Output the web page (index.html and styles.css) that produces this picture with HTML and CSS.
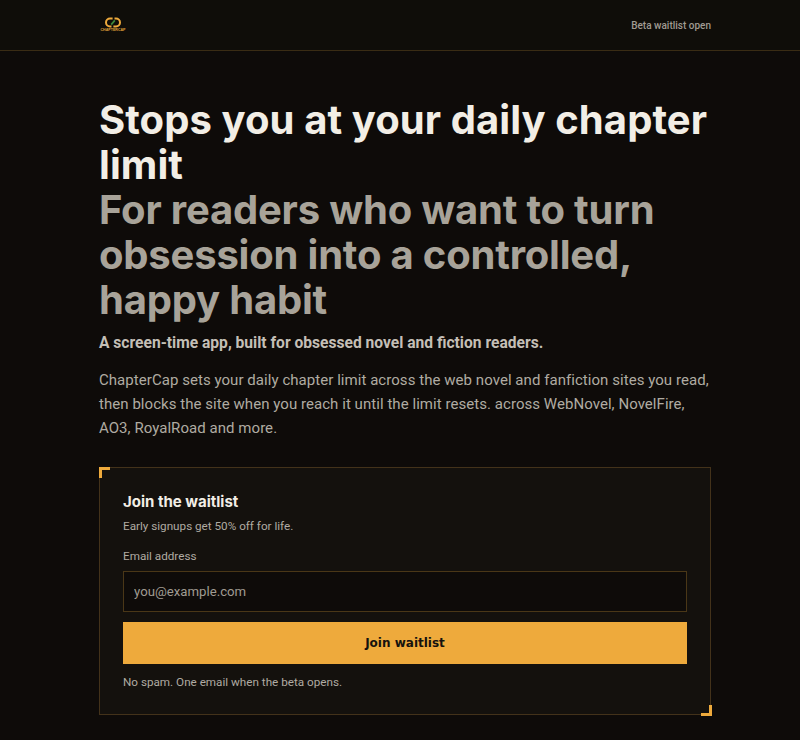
FILE: index.html
```html
<!DOCTYPE html>
<html lang="en">
<head>
<meta charset="utf-8">
<title>ChapterCap</title>
<link rel="stylesheet" href="styles.css">
</head>
<body>
<header class="topbar">
  <div class="topbar-inner">
    <div class="logo">
      <svg class="logo-mark" viewBox="0 0 16 11" width="16" height="11" aria-hidden="true">
        <path d="M7.6 1.5 H5 A4 4 0 0 0 5 9.5 H6.5" fill="none" stroke="#eeaa3c" stroke-width="2"/>
        <path d="M8.4 9.5 H11 A4 4 0 0 0 11 1.5 H9.5" fill="none" stroke="#eeaa3c" stroke-width="2"/>
        <path d="M9.8 3.4 L6.2 7.6" fill="none" stroke="#3f8a3a" stroke-width="1.7"/>
      </svg>
      <span class="logo-text">CHAPTERCAP</span>
    </div>
    <span class="status">Beta waitlist open</span>
  </div>
</header>
<main class="page">
  <h1 class="headline">Stops you at your daily chapter limit<span class="headline-sub">For readers who want to turn obsession into a controlled, happy habit</span></h1>
  <p class="lead">A screen-time app, built for obsessed novel and fiction readers.</p>
  <p class="body-copy">ChapterCap sets your daily chapter limit across the web novel and fanfiction sites you read, then blocks the site when you reach it until the limit resets. across WebNovel, NovelFire, AO3, RoyalRoad and more.</p>
  <section class="card">
    <span class="corner corner-tl"></span>
    <span class="corner corner-br"></span>
    <h2 class="card-title">Join the waitlist</h2>
    <p class="card-sub">Early signups get 50% off for life.</p>
    <form class="form">
      <label class="label" for="email">Email address</label>
      <input class="input" id="email" type="email" placeholder="you@example.com">
      <button class="button" type="button">Join waitlist</button>
    </form>
    <p class="note">No spam. One email when the beta opens.</p>
  </section>
</main>
</body>
</html>
```
FILE: styles.css
```css
* { box-sizing: border-box; }
html, body { margin: 0; padding: 0; }
body {
  background: #0e0b09;
  color: #f2eee6;
  font-family: "Roboto", "Liberation Sans", sans-serif;
  height: 740px;
  overflow: hidden;
}
.topbar {
  height: 51px;
  background: #0f0d09;
  border-bottom: 1px solid #3a2c14;
}
.topbar-inner {
  width: 612px;
  height: 50px;
  margin-left: 99px;
  display: flex;
  align-items: center;
  justify-content: space-between;
}
.logo {
  display: flex;
  flex-direction: column;
  align-items: center;
  width: 26px;
  margin-left: 1px;
  margin-top: -1px;
}
.logo-mark { display: block; }
.logo-text {
  font-family: "Liberation Sans", sans-serif;
  font-size: 3.6px;
  font-weight: 700;
  line-height: 4px;
  color: #e0a23a;
  white-space: nowrap;
}
.status {
  font-size: 10px;
  font-weight: 500;
  color: #a09b92;
}
.page {
  width: 612px;
  margin-left: 99px;
  padding-top: 46px;
}
.headline {
  margin: 0;
  font-family: "Inter", sans-serif;
  font-size: 40px;
  font-weight: 700;
  line-height: 45px;
  letter-spacing: 0.08px;
  color: #f2eee6;
}
.headline-sub {
  display: block;
  letter-spacing: -0.2px;
  color: #a8a399;
}
.lead {
  margin: 9px 0 0;
  font-size: 15.6px;
  font-weight: 700;
  line-height: 24px;
  color: #c4bfb6;
}
.body-copy {
  margin: 13px 0 0;
  font-size: 15px;
  line-height: 24px;
  letter-spacing: 0.05px;
  color: #b0aba2;
}
.card {
  position: relative;
  margin-top: 27px;
  height: 248px;
  padding: 24px 23px;
  background: #14110d;
  border: 1px solid #43321a;
}
.corner {
  position: absolute;
  width: 11px;
  height: 11px;
  border: 0 solid #eeaa3c;
}
.corner-tl { top: -1px; left: -1px; border-width: 3px 0 0 3px; }
.corner-br { bottom: -2px; right: -2px; border-width: 0 3px 3px 0; }
.card-title {
  margin: -1px 0 0;
  font-family: "Inter", sans-serif;
  font-size: 15px;
  font-weight: 700;
  line-height: 22px;
  color: #f2eee6;
}
.card-sub {
  margin: 4px 0 0;
  font-size: 11.7px;
  line-height: 18px;
  color: #b0aba2;
}
.form { display: flex; flex-direction: column; }
.label {
  margin-top: 12px;
  font-size: 11.7px;
  line-height: 18px;
  color: #b0aba2;
}
.input {
  margin-top: 6px;
  height: 41px;
  padding: 0 10px;
  background: #0e0b09;
  border: 1px solid #4a3717;
  border-radius: 0;
  color: #f2eee6;
  font-family: "Roboto", sans-serif;
  font-size: 13.2px;
  outline: none;
}
.input::placeholder { color: #a09b92; opacity: 1; }
.button {
  margin-top: 10px;
  height: 42px;
  background: #eeaa3c;
  border: 0;
  border-radius: 0;
  color: #15120e;
  font-family: "DejaVu Sans", sans-serif;
  font-size: 12px;
  font-weight: 700;
}
.note {
  margin: 9px 0 0;
  font-size: 11.7px;
  line-height: 18px;
  color: #b0aba2;
}
```
